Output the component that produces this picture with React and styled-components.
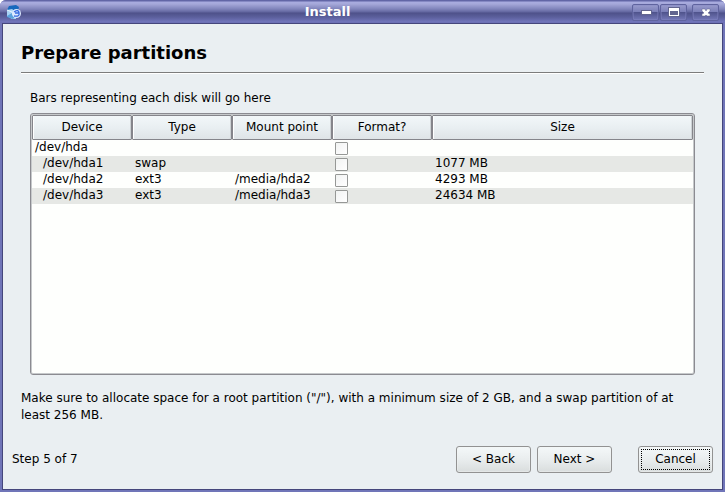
import React from "react";
import styled, { createGlobalStyle } from "styled-components";

const Global = createGlobalStyle`
  * { box-sizing: border-box; }
  body { margin: 0; background: #fff; }
  button, input { font: inherit; color: inherit; }
`;

const Window = styled.div`
  display: flex;
  flex-direction: column;
  min-height: 100vh;
  padding: 0 2px 2px;
  background: #7075b8;
  border-radius: 6px 6px 0 0;
  overflow: hidden;
  font: 12px/16px "DejaVu Sans", sans-serif;
  color: #000;
`;

const TitleBar = styled.header`
  display: grid;
  grid-template-columns: 18px 1fr 88px;
  align-items: center;
  height: 23px;
  margin: 0 -2px;
  padding: 0 5px;
  background: linear-gradient(#6266a6 0, #6266a6 1px, #a9ace0 2px, #a5a8d9 4px, #8084bb 9px, #62669f 12px, #4e518a 13px, #5b5f9c 17px, #7276bc 22px, #686cb0 23px);
`;

const Title = styled.h1`
  margin: 0;
  font-size: 13px;
  line-height: 22px;
  font-weight: bold;
  text-align: center;
  color: #fff;
`;

const AppIcon = styled.svg`
  display: block;
  width: 18px;
  height: 18px;
`;

const WindowControls = styled.div`
  display: flex;
  gap: 1px;
`;

const ControlButton = styled.button`
  display: block;
  flex: none;
  width: 27px;
  height: 17px;
  margin: 1px 0 0 ${(p) => (p.$apart ? 4 : 0)}px;
  padding: 0;
  border: 1px solid #5f639e;
  border-radius: 2px;
  background: linear-gradient(#999ccd, #7b7fb8 45%, #50548d 50%, #7478b8);
  box-shadow: inset 0 0 0 1px #8487c266;
  svg { display: block; width: 25px; height: 15px; }
`;

const Body = styled.main`
  display: flex;
  flex: 1;
  flex-direction: column;
  border: 1px solid #45467c;
  background: #eaeff2;
`;

const Page = styled.section`
  display: flex;
  flex: 1;
  flex-direction: column;
  padding: 17px 18px 0;
`;

const Heading = styled.h2`
  margin: 0;
  padding-bottom: 7px;
  font-size: 18px;
  line-height: 24px;
  border-bottom: 1px solid #7c7c7c;
  box-shadow: 0 1px #fff;
`;

const Caption = styled.p`
  margin: 17px 9px 7px;
`;

const TableFrame = styled.div`
  flex: 1;
  margin: 0 9px;
  border: 1px solid #8b8b91;
  border-radius: 3px;
  box-shadow: inset 0 0 0 1px #c6c9cb;
  padding: 1px;
  background: #fefffd;
`;

const Table = styled.table`
  width: 100%;
  border-collapse: separate;
  border-spacing: 0;
  table-layout: fixed;
`;

const HeadCell = styled.th`
  width: ${(p) => (p.$wide ? "auto" : "100px")};
  height: 25px;
  padding: 0 0 2px;
  font-weight: normal;
  border: 1px solid #85858b;
  border-radius: 1px;
  background: linear-gradient(#f2f7f9, #e9eff2 50%, #dfe4e7);
  box-shadow: inset 1px 0 #fff, inset -1px 0 #cdd2d5;
`;

const Row = styled.tr`
  background: ${(p) => (p.$shaded ? "#e6e8e5" : "#fefffd")};
`;

const Cell = styled.td`
  height: 16px;
  padding: 0 0 2px ${(p) => (p.$nested ? 11 : 3)}px;
  line-height: 14px;
  white-space: nowrap;
`;

const CheckCell = styled.td`
  height: 16px;
  padding: 2px 0 0 3px;
  vertical-align: top;
`;

const Check = styled.input`
  appearance: none;
  display: block;
  width: 13px;
  height: 13px;
  margin: 0;
  border: 1px solid #969896;
  border-radius: 1px;
  background: linear-gradient(135deg, #f1f3f2, #fff);
`;

const Note = styled.p`
  margin: 15px 0 0;
  line-height: 17px;
`;

const Footer = styled.footer`
  display: flex;
  align-items: center;
  gap: 6px;
  padding: 22px 9px 16px;
`;

const Step = styled.span`
  flex: 1;
  padding-bottom: 2px;
`;

const PushButton = styled.button`
  width: 75px;
  height: 27px;
  margin-left: ${(p) => (p.$apart ? 20 : 0)}px;
  padding: 0 0 2px;
  border: 1px solid #929292;
  border-radius: 3px;
  background: linear-gradient(#f4f8f9, #e9edee 50%, #d9dddd);
  box-shadow: inset 0 0 0 1px #f3f6f666;
  ${(p) => p.$focused && "outline: 1px dotted #000; outline-offset: -4px;"}
`;

const columns = ["Device", "Type", "Mount point", "Format?", "Size"];
const partitions = [
  { device: "/dev/hda" },
  { device: "/dev/hda1", type: "swap", size: "1077 MB", nested: true },
  { device: "/dev/hda2", type: "ext3", mount: "/media/hda2", size: "4293 MB", nested: true },
  { device: "/dev/hda3", type: "ext3", mount: "/media/hda3", size: "24634 MB", nested: true },
];

export default function App() {
  return (
    <>
      <Global />
      <Window>
        <TitleBar>
          <AppIcon viewBox="0 0 18 18" aria-hidden="true">
            <path d="M4 3l7-1 3 2-1 4-7 1-4-2z" fill="#1768bd" />
            <path d="M2 7l5-1 4 3v7l-4 0-5-3z" fill="#a8d3f4" />
            <path d="M2 13l5-3 4 2-3 4-6-2z" fill="#5ba2dd" />
            <path d="M2 7l5 2 1 3" fill="none" stroke="#e6f4ff" />
            <circle cx="11.5" cy="10.5" r="4.5" fill="#dce9ff" />
            <path d="M9 9q5-3 5 1h-4M14 10q1 4-5 3" fill="none" stroke="#3469e0" strokeWidth="1.3" />
          </AppIcon>
          <Title>Install</Title>
          <WindowControls>
            <ControlButton type="button" aria-label="Minimize">
              <svg viewBox="0 0 25 15"><path d="M8 5h11v5H8z" fill="#62658f" /><path d="M9 6h9v3H9z" fill="#fff" /></svg>
            </ControlButton>
            <ControlButton type="button" aria-label="Maximize">
              <svg viewBox="0 0 25 15"><path d="M7 2h12v10H7z" fill="#62658f" /><path fillRule="evenodd" d="M8 3h10v8H8zM9 6h8v4H9z" fill="#fff" /></svg>
            </ControlButton>
            <ControlButton type="button" aria-label="Close" $apart>
              <svg viewBox="0 0 25 15"><path d="M9 4h3l1 2 1-2h3v2l-2 2 2 1v2h-3l-1-1-1 1H9V9l2-1-2-2z" fill="#fff" stroke="#62658f" strokeWidth=".5" /></svg>
            </ControlButton>
          </WindowControls>
        </TitleBar>
        <Body>
          <Page>
            <Heading>Prepare partitions</Heading>
            <Caption>Bars representing each disk will go here</Caption>
            <TableFrame>
              <Table>
                <thead>
                  <tr>
                    {columns.map((name) => (
                      <HeadCell key={name} scope="col" $wide={name === "Size"}>{name}</HeadCell>
                    ))}
                  </tr>
                </thead>
                <tbody>
                  {partitions.map((p, i) => (
                    <Row key={p.device} $shaded={i % 2 === 1}>
                      <Cell $nested={p.nested}>{p.device}</Cell>
                      <Cell>{p.type}</Cell>
                      <Cell>{p.mount}</Cell>
                      <CheckCell><Check type="checkbox" aria-label={`Format ${p.device}`} /></CheckCell>
                      <Cell>{p.size}</Cell>
                    </Row>
                  ))}
                </tbody>
              </Table>
            </TableFrame>
            <Note>
              Make sure to allocate space for a root partition ("/"), with a minimum size of 2 GB, and a swap partition of at least 256 MB.
            </Note>
          </Page>
          <Footer>
            <Step>Step 5 of 7</Step>
            <PushButton type="button">&lt; Back</PushButton>
            <PushButton type="button">Next &gt;</PushButton>
            <PushButton type="button" $apart $focused>Cancel</PushButton>
          </Footer>
        </Body>
      </Window>
    </>
  );
}
